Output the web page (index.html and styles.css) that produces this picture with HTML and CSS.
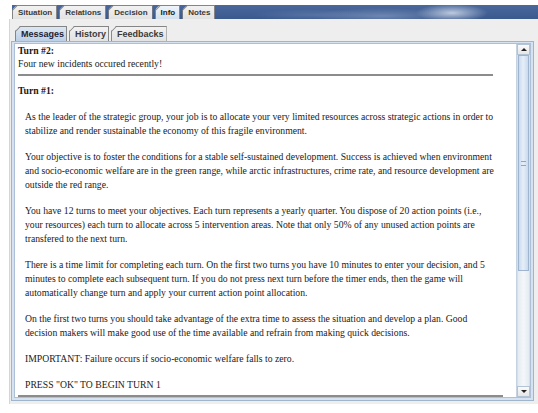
FILE: index.html
```html
<!DOCTYPE html>
<html lang="en">
<head>
<meta charset="utf-8">
<title>Info – Messages</title>
<link rel="stylesheet" href="styles.css">
</head>
<body>
<div class="app">
  <div class="main-tabs">
    <div class="tab">Situation</div>
    <div class="tab">Relations</div>
    <div class="tab">Decision</div>
    <div class="tab tab-active">Info</div>
    <div class="tab">Notes</div>
  </div>
  <div class="main-panel">
    <div class="sub-tabs">
      <div class="tab sub-tab tab-active-sub">Messages</div>
      <div class="tab sub-tab">History</div>
      <div class="tab sub-tab">Feedbacks</div>
    </div>
    <div class="content-frame">
      <div class="scroll-pane">
        <div class="viewport">
          <div class="log">
            <div class="msg">
              <div class="msg-title">Turn #2:</div>
              <div class="msg-line">Four new incidents occured recently!</div>
            </div>
            <div class="rule"></div>
            <div class="msg">
              <div class="msg-title">Turn #1:</div>
              <div class="msg-body">
                <p>As the leader of the strategic group, your job is to allocate your very limited resources across strategic actions in order to stabilize and render sustainable the economy of this fragile environment.</p>
                <p>Your objective is to foster the conditions for a stable self-sustained development. Success is achieved when environment and socio-economic welfare are in the green range, while arctic infrastructures, crime rate, and resource development are outside the red range.</p>
                <p>You have 12 turns to meet your objectives. Each turn represents a yearly quarter. You dispose of 20 action points (i.e., your resources) each turn to allocate across 5 intervention areas. Note that only 50% of any unused action points are transfered to the next turn.</p>
                <p>There is a time limit for completing each turn. On the first two turns you have 10 minutes to enter your decision, and 5 minutes to complete each subsequent turn. If you do not press next turn before the timer ends, then the game will automatically change turn and apply your current action point allocation.</p>
                <p>On the first two turns you should take advantage of the extra time to assess the situation and develop a plan. Good decision makers will make good use of the time available and refrain from making quick decisions.</p>
                <p>IMPORTANT: Failure occurs if socio-economic welfare falls to zero.</p>
                <p>PRESS "OK" TO BEGIN TURN 1</p>
              </div>
            </div>
            <div class="rule rule-wide"></div>
            <div class="msg">
              <div class="msg-title">Turn #3:</div>
            </div>
          </div>
        </div>
        <div class="scrollbar">
          <div class="sb-btn sb-up"><span class="arrow-up"></span></div>
          <div class="sb-track">
            <div class="sb-thumb"><span class="grip"></span></div>
          </div>
          <div class="sb-btn sb-down"><span class="arrow-down"></span></div>
        </div>
      </div>
    </div>
  </div>
</div>
</body>
</html>
```

FILE: styles.css
```css
html, body {
  margin: 0;
  padding: 0;
  background: #ffffff;
}

.app {
  width: 529px;
  padding: 5px 0 0 9px;
  font-family: "Liberation Sans", Arial, sans-serif;
}

/* top tab strip sits on a dark blue banner */
.main-tabs {
  display: flex;
  height: 14px;
  margin-left: 3px;
  gap: 2px;
  background:
    radial-gradient(ellipse 36px 9px at 440px 8px, rgba(220, 228, 242, 0.8), rgba(220, 228, 242, 0) 100%),
    radial-gradient(ellipse 70px 8px at 370px 11px, rgba(150, 170, 205, 0.55), rgba(150, 170, 205, 0) 100%),
    radial-gradient(ellipse 60px 6px at 300px 10px, rgba(120, 145, 190, 0.4), rgba(120, 145, 190, 0) 100%),
    linear-gradient(#4a689c, #3a598d);
}

.tab {
  position: relative;
  box-sizing: border-box;
  height: 100%;
  padding: 0 4px 0 5px;
  font-size: 8px;
  font-weight: bold;
  line-height: 13px;
  color: #3a3a3a;
  background: linear-gradient(#f2f2f2, #e2e2e2);
  border: 1px solid #858585;
  border-bottom: none;
  clip-path: polygon(5px 0, 100% 0, 100% 100%, 0 100%, 0 5px);
  white-space: nowrap;
}

/* the cut top-left corner of each tab */
.tab::before {
  content: "";
  position: absolute;
  left: -1px;
  top: 4px;
  width: 7px;
  height: 1px;
  background: #858585;
  transform: rotate(-45deg);
  transform-origin: left top;
}

.tab-active {
  background: linear-gradient(#eef4fa, #d3e0ee);
  color: #222222;
}

.main-panel {
  background: #eeeeee;
  border-left: 1px solid #cdd7e3;
  padding: 7px 4px 3px 1px;
}

.sub-tabs {
  display: flex;
  height: 15px;
  padding-left: 4px;
  gap: 2px;
}

.sub-tab {
  font-size: 9px;
  line-height: 14px;
  padding: 0 2px 0 5px;
}

.tab-active-sub {
  background: linear-gradient(#dce7f3, #bccfe5);
  color: #222233;
}

.content-frame {
  border: 1px solid #9fb4cd;
  background: #d6e2ef;
  padding: 1px 2px 2px 2px;
}

.scroll-pane {
  display: flex;
  height: 353px;
  border: 1px solid #adc0d6;
  background: #ffffff;
}

.viewport {
  flex: 1;
  overflow: hidden;
  padding: 0 0 0 3px;
}

.log {
  width: 486px;
  font-family: "Liberation Serif", "Times New Roman", serif;
  font-size: 9.7px;
  line-height: 13px;
  color: #1a1a1a;
}

.msg-title {
  font-weight: bold;
}

.msg-body p {
  margin: 12px 0 0 7px;
  width: 470px;
  line-height: 14px;
}

.msg-body p:first-child {
  margin-top: 13px;
}

.rule {
  height: 2px;
  width: 475px;
  margin: 4px 0 8px 0;
  background: #8c8c8c;
}

.rule-wide {
  width: 485px;
  margin-top: 3px;
}

/* vertical scrollbar */
.scrollbar {
  display: flex;
  flex-direction: column;
  width: 13px;
  border-left: 1px solid #c4d2e2;
  background: #eef2f7;
}

.sb-btn {
  height: 11px;
  box-sizing: border-box;
  border: 1px solid #b3c3d6;
  background: linear-gradient(#fafafa, #e6e6e6);
  display: flex;
  align-items: center;
  justify-content: center;
}

.arrow-up,
.arrow-down {
  width: 0;
  height: 0;
  border-left: 3px solid transparent;
  border-right: 3px solid transparent;
}

.arrow-up {
  border-bottom: 3px solid #222222;
}

.arrow-down {
  border-top: 3px solid #222222;
}

.sb-track {
  flex: 1;
  background: linear-gradient(90deg, #e5ebf2, #f4f7fa 50%, #e5ebf2);
  border-left: 1px solid #d4dfeb;
  border-right: 1px solid #d4dfeb;
}

.sb-thumb {
  height: 216px;
  box-sizing: border-box;
  border: 1px solid #9fb4ce;
  background: linear-gradient(90deg, #c9daed, #e6eff8 45%, #c9daed);
  display: flex;
  align-items: center;
  justify-content: center;
}

.grip {
  width: 5px;
  height: 3px;
  border-top: 1px solid #8ea6c4;
  border-bottom: 1px solid #8ea6c4;
}
```
